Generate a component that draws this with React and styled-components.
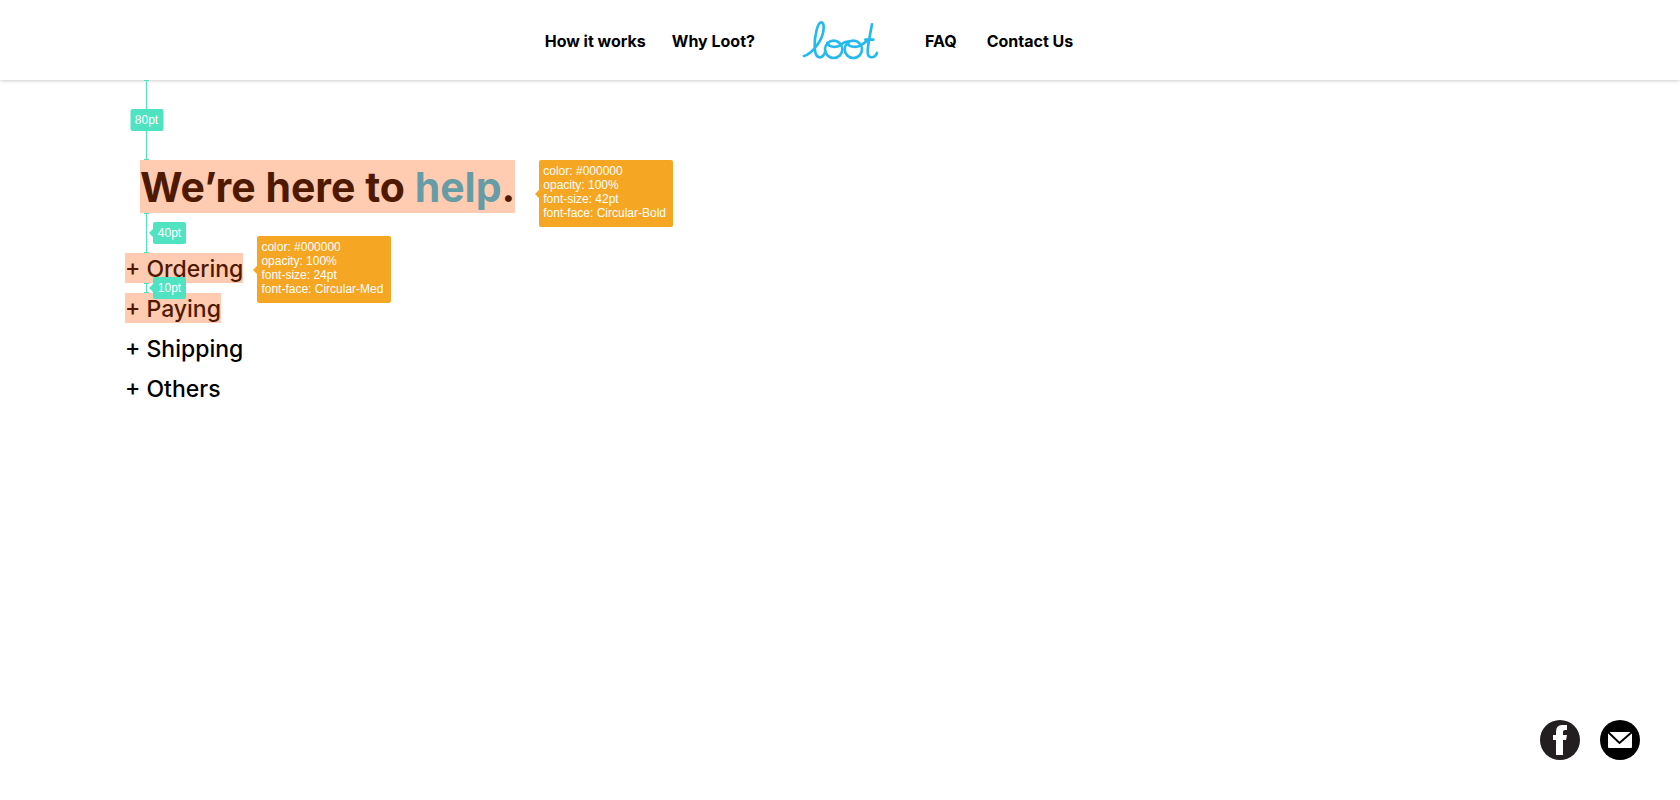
import React from "react";
import styled, { createGlobalStyle, css } from "styled-components";

const Global = createGlobalStyle`
  * { box-sizing: border-box; }
  body { margin: 0; background: #fff; color: #000; font-family: Inter, "Liberation Sans", sans-serif; }
`;

const Page = styled.div`
  min-height: 100vh;
  display: flex;
  flex-direction: column;
`;

const Header = styled.header`
  height: 80px;
  display: grid;
  grid-template-columns: 1fr auto 1fr;
  align-items: center;
  column-gap: 46px;
  box-shadow: 0 0 4px rgba(0, 0, 0, 0.3);
`;

const NavGroup = styled.nav`
  display: flex;
  gap: ${(p) => (p.$end ? 26 : 30)}px;
  padding-top: 2px;
  justify-content: ${(p) => (p.$end ? "flex-end" : "flex-start")};
`;

const NavLink = styled.a`
  font-size: 16px;
  line-height: 20px;
  font-weight: 700;
  color: #000;
  text-decoration: none;
`;

const LogoLink = styled.a`
  display: block;
  svg { display: block; }
`;

const Main = styled.main`
  flex: 1;
  padding: 80px 125px 0;
`;

const marked = css`
  &::after {
    content: "";
    position: absolute;
    inset: 0;
    background: rgba(255, 85, 0, 0.3);
    pointer-events: none;
  }
`;

const Title = styled.h1`
  position: relative;
  width: fit-content;
  margin: 0 0 40px 15px;
  padding-top: 2px;
  font-size: 41px;
  line-height: 51px;
  font-weight: 700;
  white-space: nowrap;
  ${marked}
`;

const Accent = styled.span`
  color: #24bbee;
`;

const Topics = styled.ul`
  margin: 0;
  padding: 0;
  list-style: none;
  display: flex;
  flex-direction: column;
  align-items: flex-start;
  gap: 10px;
`;

const Topic = styled.li`
  position: relative;
`;

const TopicButton = styled.button`
  display: block;
  position: relative;
  padding: 2px 0 0;
  border: 0;
  background: none;
  color: #000;
  font: 500 23px/28px Inter, "Liberation Sans", sans-serif;
  cursor: pointer;
  ${(p) => p.$marked && marked}
`;

const Measure = styled.div`
  position: absolute;
  z-index: 2;
  left: ${(p) => p.$left}px;
  top: ${(p) => p.$top};
  width: 5px;
  height: ${(p) => p.$height}px;
  border: solid #50e3c2;
  border-width: 1px 0;
  background: linear-gradient(#50e3c2, #50e3c2) center / 1px 100% no-repeat;
`;

const Distance = styled.span`
  position: absolute;
  top: 50%;
  left: ${(p) => (p.$side ? "9px" : "50%")};
  transform: translate(${(p) => (p.$side ? "0" : "-50%")}, -50%);
  min-width: 33px;
  padding: 0 4px;
  border-radius: 2px;
  background: #50e3c2;
  color: #fff;
  font: 12px/22px "Liberation Sans", Arial, sans-serif;
  text-align: center;
  ${(p) => p.$side && css`
    &::before {
      content: "";
      position: absolute;
      right: 100%;
      top: 7px;
      border: solid transparent;
      border-width: 4px 4px 4px 0;
      border-right-color: #50e3c2;
    }
  `}
`;

const Spec = styled.aside`
  position: absolute;
  z-index: 1;
  left: calc(100% + ${(p) => p.$gap}px);
  top: ${(p) => p.$top}px;
  min-width: 134px;
  height: 67px;
  padding: 4px;
  border-radius: 2px;
  background: #f5a623;
  color: #fff;
  font: 12px/14px "Liberation Sans", Arial, sans-serif;
  white-space: pre;
  &::before {
    content: "";
    position: absolute;
    right: 100%;
    top: 30px;
    border: solid transparent;
    border-width: 4px 4px 4px 0;
    border-right-color: #f5a623;
  }
`;

const Footer = styled.footer`
  display: flex;
  justify-content: flex-end;
  gap: 20px;
  padding: 40px;
`;

const Social = styled.a`
  display: block;
  width: 40px;
  height: 40px;
  svg { display: block; }
`;

const specText = (size, face) =>
  `color: #000000\nopacity: 100%\nfont-size: ${size}\nfont-face: ${face}`;

function Logo() {
  return (
    <svg width="78" height="40" viewBox="33 29 234 120" fill="none" stroke="#26b9ed" strokeWidth="8" strokeLinecap="round" strokeLinejoin="round">
      <path d="M42 137C66 130 101 88 101 52C101 42 99 36 94 36C82 36 74 78 74 105C74 128 79 141 89 141C98 141 103 133 106 124" />
      <ellipse cx="131" cy="117" rx="26" ry="26" />
      <ellipse cx="190" cy="117" rx="26" ry="26" />
      <path d="M112 98C118 112 140 112 150 105C158 99 163 92 176 94" />
      <path d="M172 98C178 112 200 112 212 105C222 99 228 94 236 88" />
      <path d="M246 42C239 80 233 106 233 124C233 146 254 145 261 128M226 88H250" />
    </svg>
  );
}

export default function App() {
  return (
    <Page>
      <Global />
      <Header>
        <NavGroup $end aria-label="About">
          <NavLink href="#how">How it works</NavLink>
          <NavLink href="#why">Why Loot?</NavLink>
        </NavGroup>
        <LogoLink href="#home" aria-label="Loot"><Logo /></LogoLink>
        <NavGroup aria-label="Support">
          <NavLink href="#faq">FAQ</NavLink>
          <NavLink href="#contact">Contact Us</NavLink>
        </NavGroup>
      </Header>
      <Main>
        <Title>
          We’re here to <Accent>help</Accent>.
          <Measure $left={4} $top="-80px" $height={80}><Distance>80pt</Distance></Measure>
          <Measure $left={4} $top="100%" $height={40}><Distance $side>40pt</Distance></Measure>
          <Spec $gap={24} $top={0}>{specText("42pt", "Circular-Bold")}</Spec>
        </Title>
        <Topics>
          <Topic>
            <TopicButton $marked>+ Ordering</TopicButton>
            <Measure $left={19} $top="100%" $height={10}><Distance $side>10pt</Distance></Measure>
            <Spec $gap={14} $top={-17}>{specText("24pt", "Circular-Med")}</Spec>
          </Topic>
          <Topic><TopicButton $marked>+ Paying</TopicButton></Topic>
          <Topic><TopicButton>+ Shipping</TopicButton></Topic>
          <Topic><TopicButton>+ Others</TopicButton></Topic>
        </Topics>
      </Main>
      <Footer>
        <Social href="#facebook" aria-label="Facebook">
          <svg width="40" height="40" viewBox="0 0 40 40">
            <circle cx="20" cy="20" r="20" fill="#231f20" />
            <path d="M16 35V20H13V15H16V12Q16 5 22 5H27V10H25Q23 10 23 12V15H27L26 20H23V35Z" fill="#fff" />
          </svg>
        </Social>
        <Social href="#email" aria-label="Email">
          <svg width="40" height="40" viewBox="0 0 40 40">
            <circle cx="20" cy="20" r="20" fill="#000" />
            <rect x="8" y="12" width="24" height="16" rx="1" fill="#fff" />
            <path d="M8 12L19.500 23L32 12" fill="none" stroke="#000" strokeWidth="2" />
          </svg>
        </Social>
      </Footer>
    </Page>
  );
}
